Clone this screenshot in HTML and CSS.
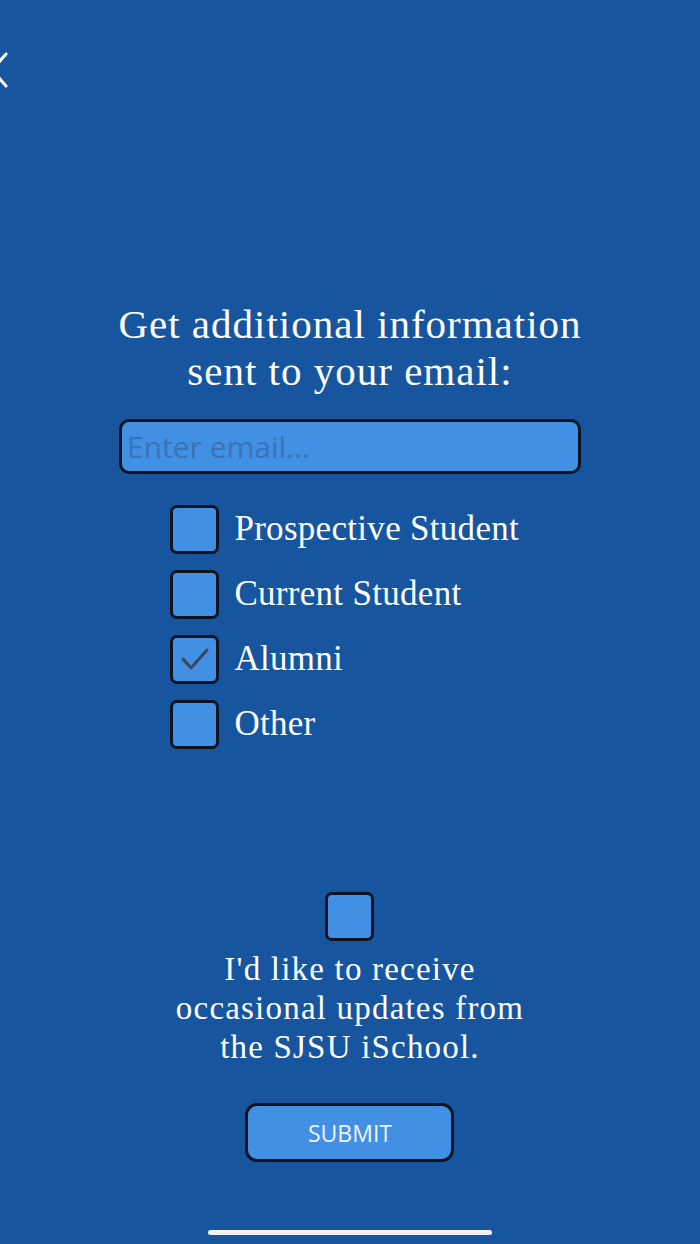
FILE: index.html
```html
<!DOCTYPE html>
<html lang="en">
<head>
    <meta charset="UTF-8">
    <meta name="viewport" content="width=device-width, initial-scale=1.0">
    <title>Get Info - SJSU iSchool</title>
    <link rel="stylesheet" href="styles.css">
</head>
<body>
    <div class="screen">
        <a class="back" href="#">
            <svg width="20" height="40" viewBox="0 0 20 40">
                <polyline points="6,4 -8,20 6,36" fill="none" stroke="white" stroke-width="3" stroke-linecap="round" stroke-linejoin="round"/>
            </svg>
        </a>

        <main class="form">
            <h1 class="title">Get additional information<br>sent to your email:</h1>

            <input class="email" type="email" placeholder="Enter email...">

            <ul class="options">
                <li class="option"><span class="box"></span>Prospective Student</li>
                <li class="option"><span class="box"></span>Current Student</li>
                <li class="option">
                    <span class="box">
                        <svg width="30" height="30" viewBox="0 0 30 30">
                            <polyline points="3,15 11,24 27,6" fill="none" stroke="#3d4754" stroke-width="3" stroke-linecap="round" stroke-linejoin="round"/>
                        </svg>
                    </span>Alumni
                </li>
                <li class="option"><span class="box"></span>Other</li>
            </ul>

            <div class="updates">
                <span class="box"></span>
                <p>I'd like to receive<br>occasional updates from<br>the SJSU iSchool.</p>
            </div>

            <button class="submit">SUBMIT</button>
        </main>

        <div class="home-bar"></div>
    </div>
</body>
</html>
```

FILE: styles.css
```css
body {
    margin: 0;
    padding: 0;
    background-color: #17569e;
    font-family: "Liberation Serif", serif;
    color: white;
}

.screen {
    width: 700px;
    height: 1244px;
    display: flex;
    flex-direction: column;
    align-items: center;
    overflow: hidden;
}

.back {
    align-self: flex-start;
    display: block;
    margin-top: 50px;
    height: 40px;
}

.form {
    display: flex;
    flex-direction: column;
    align-items: center;
    margin-top: 211px;
    flex: 1;
}

.title {
    margin: 0;
    font-weight: normal;
    font-size: 41px;
    line-height: 47px;
    letter-spacing: 1px;
    text-align: center;
}

.email {
    box-sizing: border-box;
    width: 462px;
    height: 55px;
    margin-top: 24px;
    padding: 0 5px;
    background-color: #4290e4;
    border: 3px solid #0b1420;
    border-radius: 10px;
    font-family: "Open Sans", sans-serif;
    font-size: 30px;
    color: #1b3e66;
    outline: none;
}

.email::placeholder {
    color: #3a72b8;
}

.options {
    list-style: none;
    margin: 31px 0 0 0;
    padding: 0;
    display: flex;
    flex-direction: column;
    gap: 17px;
    align-self: flex-start;
    margin-left: 52px;
}

.option {
    display: flex;
    align-items: center;
    gap: 15px;
    font-size: 35px;
    letter-spacing: 0.3px;
    height: 48px;
}

.box {
    box-sizing: border-box;
    width: 49px;
    height: 49px;
    background-color: #4290e4;
    border: 3px solid #0b1420;
    border-radius: 7px;
    display: flex;
    align-items: center;
    justify-content: center;
    flex-shrink: 0;
}

.updates {
    display: flex;
    flex-direction: column;
    align-items: center;
    margin-top: 144px;
}

.updates p {
    margin: 9px 0 0 0;
    font-size: 33px;
    line-height: 39px;
    letter-spacing: 1.2px;
    text-align: center;
}

.submit {
    box-sizing: border-box;
    width: 209px;
    height: 59px;
    margin-top: 36px;
    background-color: #4290e4;
    border: 3px solid #0b1420;
    border-radius: 12px;
    color: #eef4fb;
    font-family: "Open Sans", sans-serif;
    font-size: 23px;
    cursor: pointer;
}

.home-bar {
    width: 284px;
    height: 5px;
    margin-bottom: 9px;
    background-color: #f2f2f2;
    border-radius: 3px;
}
```
